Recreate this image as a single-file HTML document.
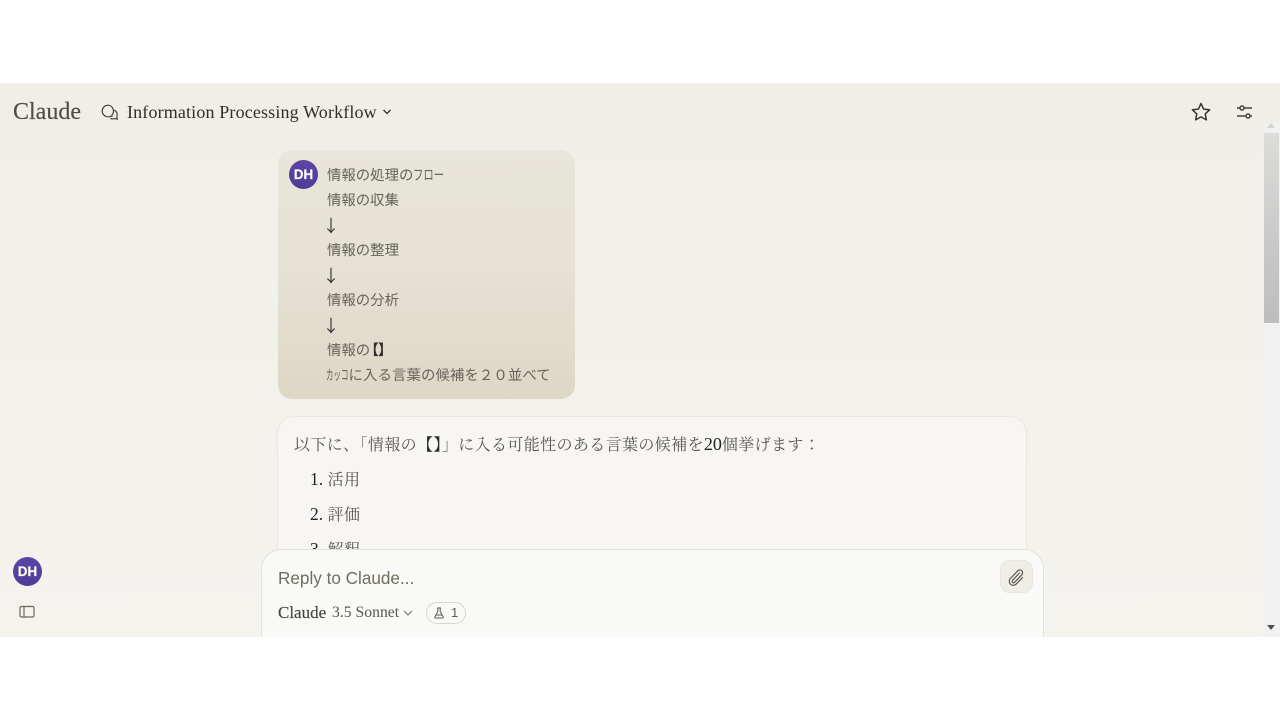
<!DOCTYPE html>
<html lang="ja"><head><meta charset="utf-8"><style>
html,body{margin:0;padding:0;width:1280px;height:720px;overflow:hidden;background:#fff}
.a{position:absolute;white-space:nowrap}
#app{position:absolute;left:0;top:83px;width:1280px;height:554px;overflow:hidden;background:linear-gradient(180deg,#f0eee7 0,#f2f0ea 200px,#f4f3ee 100%)}
.s{font-family:"Liberation Serif","Noto Serif CJK JP",serif}
.j{font-family:"Noto Sans CJK JP","Liberation Sans",sans-serif;font-size:14.4px;line-height:25px;color:#66635a;left:327px}
.ar{font-family:"Noto Sans CJK JP","Liberation Sans",sans-serif;font-size:17px;line-height:25px;color:#333;left:322.5px}
.m{font-family:"Noto Serif CJK JP","Liberation Serif",serif;font-size:16px;line-height:24px;color:#55544f;letter-spacing:.38px}
.n{font-family:"Liberation Serif",serif;color:#222;font-size:17.5px;letter-spacing:0}
.av{position:absolute;border-radius:50%;width:29px;height:29px;background:linear-gradient(180deg,#5b45a8,#4f3c96);color:#fff;font:bold 13.5px/29px "Liberation Sans",sans-serif;text-align:center;-webkit-text-stroke:.2px #fff}
.sq{display:inline-block;transform-origin:0 50%}
</style></head><body>
<div id="app">
<div class="a s" style="left:13px;top:14px;font-size:24px;line-height:30px;color:#4f4d43;-webkit-text-stroke:.15px #4f4d43">Claude</div>
<svg class="a" style="left:100px;top:20px" width="19" height="19" viewBox="0 0 19 19" fill="none" stroke="#45433b" stroke-width="1.2"><path d="M8 2.2a5.8 5.8 0 1 0 0 11.6c.9 0 1.7-.2 2.4-.5l1.6 0 0-1.5a5.8 5.8 0 0 0-4-9.6z"/><path d="M14.2 7.2a4.6 4.6 0 0 1 2.6 6.2l.5 2.7-2.8-.6a4.6 4.6 0 0 1-4.2-.2"/></svg>
<div class="a s" style="left:127px;top:15px;font-size:18px;line-height:28px;color:#2f2e29;letter-spacing:.15px">Information Processing Workflow</div>
<svg class="a" style="left:381px;top:24px" width="12" height="10" viewBox="0 0 12 10" fill="none" stroke="#2f2e29" stroke-width="1.3"><path d="M2.5 3l3.5 3.5L9.5 3"/></svg>
<svg class="a" style="left:1190px;top:17.5px" width="22" height="22" viewBox="0 0 22 22" fill="none" stroke="#36352f" stroke-width="1.5" stroke-linejoin="round"><path d="M11 2.5l2.6 5.6 6 .7-4.4 4.1 1.2 6-5.4-3-5.4 3 1.2-6-4.400-4.100 6-.7z"/></svg>
<svg class="a" style="left:1234px;top:19px" width="22" height="20" viewBox="0 0 22 20" fill="none" stroke="#45433b" stroke-width="1.5"><path d="M3 6h3M10 6h8M3 14h9M16 14h2"/><circle cx="8" cy="6" r="2"/><circle cx="14" cy="14" r="2"/></svg>

<div class="a" style="left:278px;top:67px;width:297px;height:249px;border-radius:14px;background:linear-gradient(180deg,#e8e5da 0,#e5e1d3 50%,#ddd7c5 100%)"></div>
<div class="av" style="left:289px;top:77px">DH</div>
<div class="a j" style="top:78.500px">情報の処理の<span class="sq" style="transform:scaleX(.72)">フロー</span></div>
<div class="a j" style="top:103.500px">情報の収集</div>
<div class="a ar" style="top:129px">↓</div>
<div class="a j" style="top:153.500px">情報の整理</div>
<div class="a ar" style="top:179px">↓</div>
<div class="a j" style="top:203.500px">情報の分析</div>
<div class="a ar" style="top:229px">↓</div>
<div class="a j" style="top:253.500px">情報の<span style="color:#2f2e29;font-weight:700;font-feature-settings:'palt';margin-left:1px">【】</span></div>
<div class="a j" style="top:278.500px;left:326px"><span class="sq" style="transform:scaleX(.52);width:22.500px">カッコ</span><span style="letter-spacing:.1px">に入る言葉の候補を２０並べて</span></div>

<div class="a" style="left:277px;top:333px;width:750px;height:300px;border-radius:18px;background:linear-gradient(180deg,#f7f6f3,#f8f7f5);border:1px solid #e9e7df;box-sizing:border-box"></div>
<div class="a m" style="left:294px;top:349px">以下に、「情報の<b style="font-weight:700;color:#2a2a26">【】</b>」に入る可能性のある言葉の候補を<span class="n" style="font-size:18px">20</span>個挙げます：</div>
<div class="a m" style="left:310px;top:384px"><span class="n">1.</span> 活用</div>
<div class="a m" style="left:310px;top:419px"><span class="n">2.</span> 評価</div>
<div class="a m" style="left:310px;top:454px"><span class="n">3.</span> 解釈</div>

<div class="a" style="left:261px;top:466px;width:782.500px;height:110px;border-radius:20px;background:#f9f9f7;border:1px solid #e3e1d9;box-sizing:border-box"></div>
<div class="a" style="left:278px;top:483px;font:17.150px/24px 'Liberation Sans',sans-serif;color:#6f6c60">Reply to Claude...</div>
<div class="a s" style="left:278px;top:519px;font-size:17px;line-height:22px;color:#45433b;-webkit-text-stroke:.15px #45433b">Claude</div>
<div class="a s" style="left:332px;top:519px;font-size:15.700px;line-height:22px;color:#5a574c">3.5 Sonnet</div>
<svg class="a" style="left:402px;top:524px" width="12" height="12" viewBox="0 0 12 12" fill="none" stroke="#6f6c60" stroke-width="1"><path d="M2 4l4 4 4-4"/></svg>
<div class="a" style="left:426px;top:519px;width:40px;height:22px;border:1px solid #d8d6cc;border-radius:11px;box-sizing:border-box"></div>
<svg class="a" style="left:433px;top:524px" width="12" height="12" viewBox="0 0 12 12" fill="none" stroke="#5f5c50" stroke-width="1"><path d="M4 1h4M4.800 1v3.500L1.800 10q-.4 1 .7 1h7q1.100 0 .7-1L7.200 4.500V1M3 8h6"/></svg>
<div class="a" style="left:451px;top:521px;font:13px/18px 'Liberation Sans',sans-serif;color:#5f5c50">1</div>
<div class="a" style="left:1000px;top:477px;width:33px;height:33px;border-radius:10px;background:#efede6;border:1px solid #e8e6dd;box-sizing:border-box"></div>
<svg class="a" style="left:1006px;top:484px" width="20" height="20" viewBox="0 0 20 20" fill="none" stroke="#5a574c" stroke-width="1.200" stroke-linecap="round"><path d="M13.500 6L6.600 13.300a1.400 1.400 0 0 0 2 2L15.800 7.800a2.800 2.800 0 0 0-4-4L4.400 11.500a4 4 0 0 0 5.800 5.600L16.500 10.500"/></svg>

<div class="av" style="left:13px;top:474px">DH</div>
<svg class="a" style="left:19px;top:522px" width="16" height="14" viewBox="0 0 16 14" fill="none" stroke="#6a685d" stroke-width="1.200"><rect x="1" y="1.500" width="14" height="10.500" rx="1.500"/><path d="M5 1.500v10.500"/></svg>

<div class="a" style="left:1263px;top:40px;width:17px;height:514px;background:#f1f1f1"></div>
<div class="a" style="left:1264px;top:50px;width:15px;height:190px;background:linear-gradient(180deg,#dcdcda,#c8c8c8 60%,#bdbdbd)"></div>
<div class="a" style="left:1267px;top:40px;width:0;height:0;border-left:4.500px solid transparent;border-right:4.500px solid transparent;border-bottom:5px solid #d5d5d0"></div>
<div class="a" style="left:1267px;top:542px;width:0;height:0;border-left:4.500px solid transparent;border-right:4.500px solid transparent;border-top:5px solid #505050"></div>
</div>
</body></html>
